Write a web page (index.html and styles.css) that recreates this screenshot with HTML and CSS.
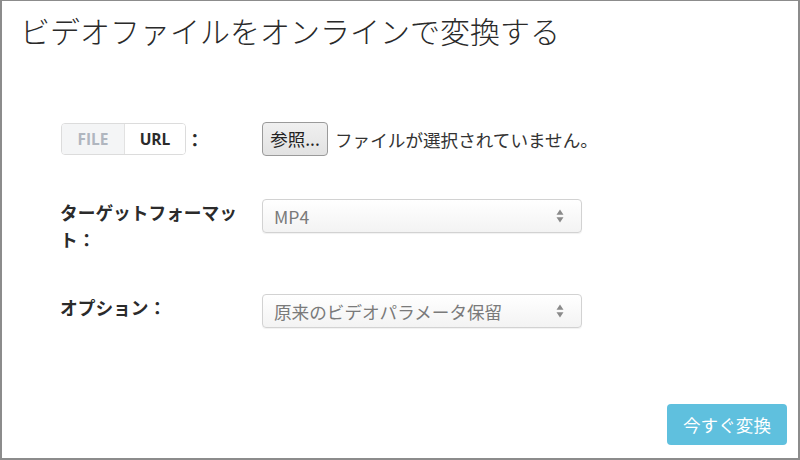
FILE: index.html
```html
<!DOCTYPE html>
<html lang="ja">
<head>
<meta charset="utf-8">
<link rel="stylesheet" href="styles.css">
</head>
<body>
<div class="frame">
  <h1 class="title">ビデオファイルをオンラインで変換する</h1>
  <div class="form">
    <div class="row row-file">
      <div class="label label-toggle">
        <div class="toggle">
          <span class="seg seg-off">FILE</span>
          <span class="seg seg-on">URL</span>
        </div>
        <span class="colon">：</span>
      </div>
      <div class="field file-field">
        <span class="browse">参照...</span>
        <span class="file-status">ファイルが選択されていません。</span>
      </div>
    </div>
    <div class="row row-format">
      <div class="label">ターゲットフォーマット：</div>
      <div class="field">
        <div class="select">
          <span class="select-text">MP4</span>
          <svg class="arrows" width="8" height="14" viewBox="0 0 8 14"><path d="M4 0.5 L7.5 5.8 L0.5 5.8 Z M4 13.5 L7.5 8.2 L0.5 8.2 Z" fill="#8a8a8a"/></svg>
        </div>
      </div>
    </div>
    <div class="row row-option">
      <div class="label">オプション：</div>
      <div class="field">
        <div class="select">
          <span class="select-text">原来のビデオパラメータ保留</span>
          <svg class="arrows" width="8" height="14" viewBox="0 0 8 14"><path d="M4 0.5 L7.5 5.8 L0.5 5.8 Z M4 13.5 L7.5 8.2 L0.5 8.2 Z" fill="#8a8a8a"/></svg>
        </div>
      </div>
    </div>
  </div>
  <div class="actions">
    <button class="convert">今すぐ変換</button>
  </div>
</div>
</body>
</html>
```
FILE: styles.css
```css
html, body {
  margin: 0;
  padding: 0;
  background: #ffffff;
}
body {
  font-family: "Noto Sans CJK JP", "Noto Sans", sans-serif;
  color: #333333;
}
.frame {
  box-sizing: border-box;
  width: 800px;
  height: 460px;
  border: 2px solid #8c8c8c;
  border-top-width: 1px;
  display: flex;
  flex-direction: column;
}
.title {
  margin: 0;
  padding: 11px 0 0 18px;
  font-size: 30px;
  line-height: 36px;
  font-weight: 300;
  color: #2a2a2a;
}
.form {
  padding-left: 58px;
  display: flex;
  flex-direction: column;
}
.row {
  display: flex;
  align-items: flex-start;
}
.row-file {
  margin-top: 74px;
  align-items: center;
}
.row-format {
  margin-top: 43px;
}
.row-option {
  margin-top: 41px;
}
.label {
  width: 182px;
  margin-right: 20px;
  font-size: 17.7px;
  line-height: 27px;
  font-weight: 700;
  color: #2b2b2b;
}
.label-toggle {
  display: flex;
  align-items: center;
}
.toggle {
  display: flex;
  height: 32px;
  box-sizing: border-box;
  border: 1px solid #dcdcdc;
  border-radius: 4px;
  overflow: hidden;
  margin-left: 1px;
}
.seg {
  font-family: "Open Sans", "Noto Sans", sans-serif;
  font-weight: 700;
  font-size: 15.5px;
  line-height: 30px;
  text-align: center;
}
.seg-off {
  width: 62px;
  background: #f4f5f6;
  color: #b0b6bf;
  border-right: 1px solid #e2e2e2;
}
.seg-on {
  width: 60px;
  background: #ffffff;
  color: #2b2b2b;
}
.field {
  display: flex;
}
.file-field {
  align-items: center;
}
.browse {
  box-sizing: border-box;
  height: 34px;
  width: 66px;
  border: 1px solid #9a9a9a;
  border-radius: 4px;
  background: linear-gradient(#f0f0f0, #e2e2e2);
  font-size: 17.5px;
  line-height: 32px;
  text-align: center;
  color: #222;
}
.file-status {
  margin-left: 7px;
  font-size: 17.6px;
  color: #333;
}
.select {
  box-sizing: border-box;
  width: 320px;
  height: 34px;
  border: 1px solid #d2d2d2;
  border-radius: 4px;
  background: linear-gradient(#ffffff, #f3f3f3);
  box-shadow: 0 1px 1px rgba(0,0,0,0.06);
  display: flex;
  align-items: center;
  justify-content: space-between;
  padding: 0 17px 0 11px;
}
.select-text {
  font-size: 17.6px;
  color: #7a7a7a;
}
.actions {
  margin-top: auto;
  display: flex;
  justify-content: flex-end;
  padding: 0 11px 13px 0;
}
.convert {
  width: 120px;
  height: 41px;
  border: none;
  border-radius: 4px;
  background: #5fc0de;
  color: #ffffff;
  font-family: "Noto Sans CJK JP", "Noto Sans", sans-serif;
  font-size: 17.6px;
  padding: 0;
}
```
